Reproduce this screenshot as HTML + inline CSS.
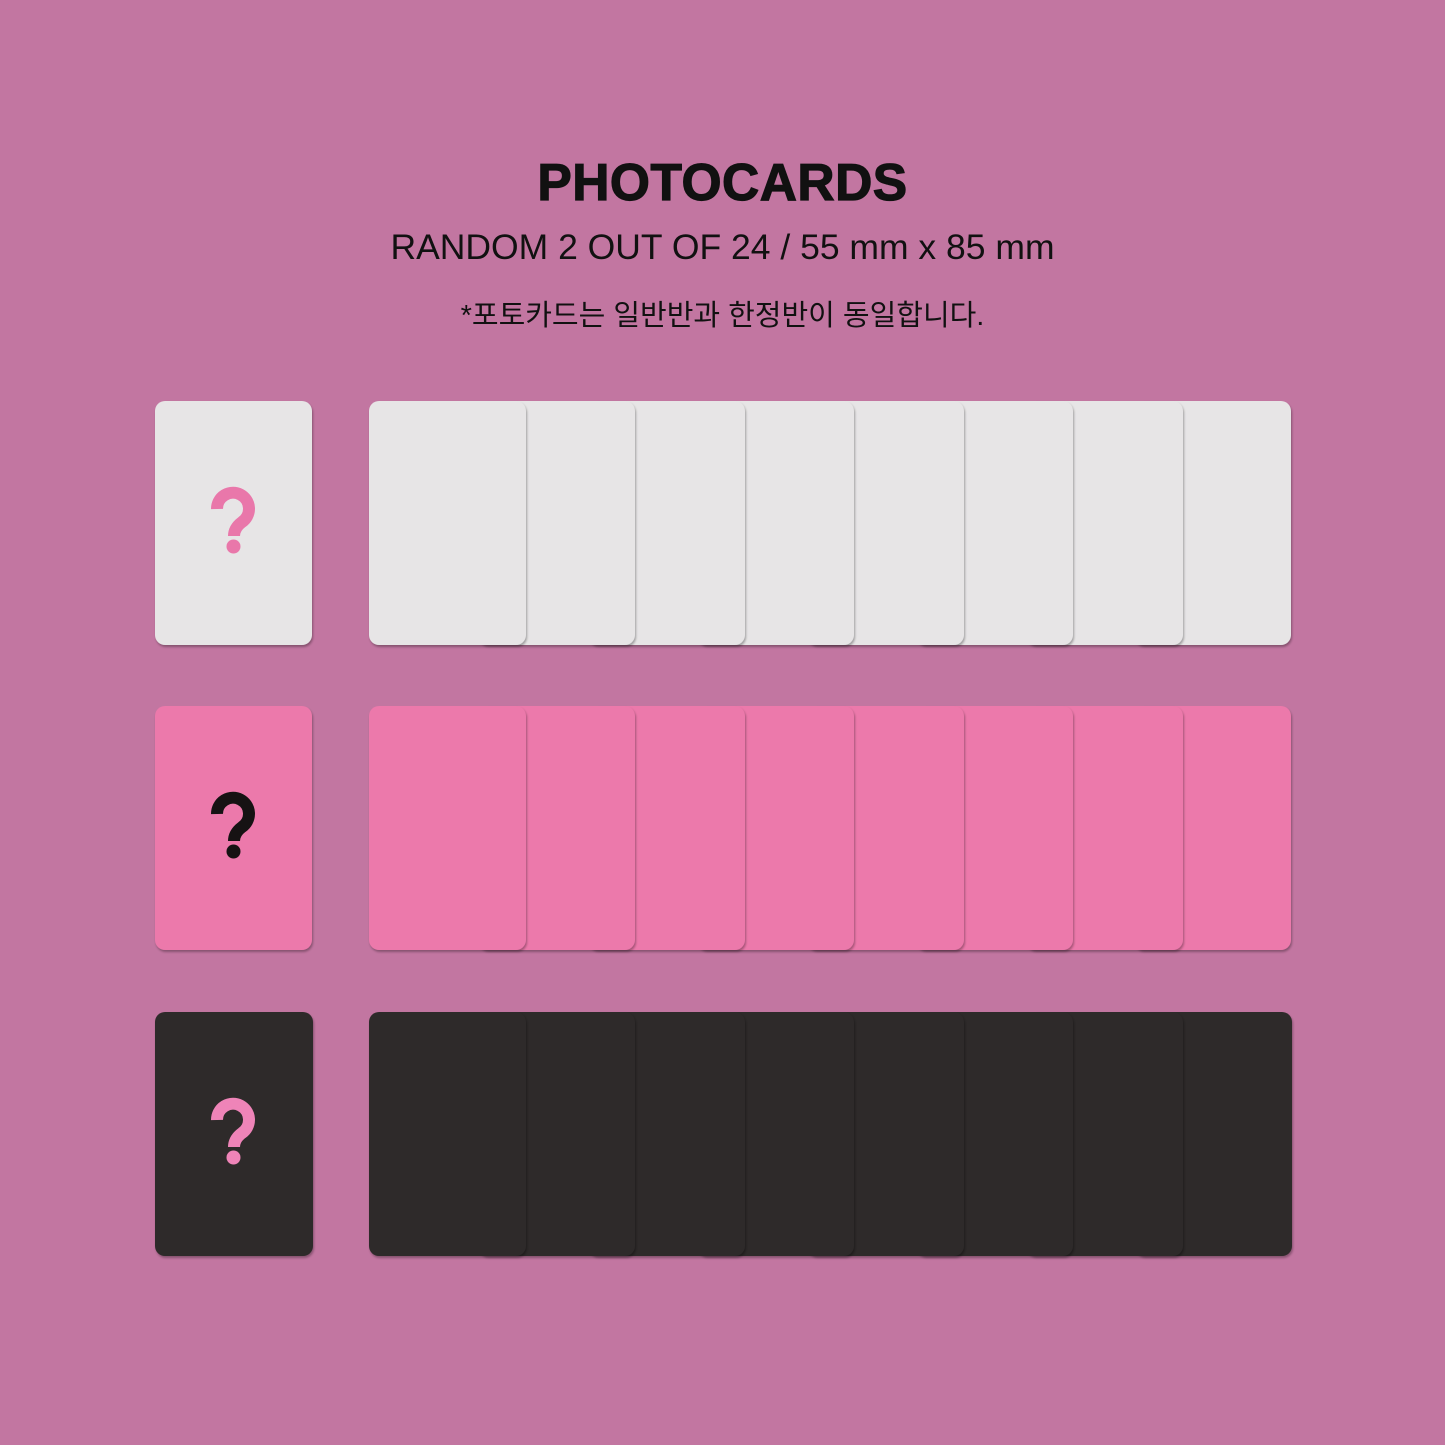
<!DOCTYPE html>
<html><head><meta charset="utf-8"><style>
html,body{margin:0;padding:0}
body{width:1445px;height:1445px;background:#c276a1;position:relative;overflow:hidden;font-family:"Liberation Sans","Noto Sans CJK KR",sans-serif}
.t{position:absolute;left:0;width:1445px;text-align:center;color:#111}
.c{position:absolute;width:157px;height:244px;border-radius:10px;box-shadow:1px 2px 2px rgba(0,0,0,.3)}
.w{background:#e7e5e6}.p{background:#ec79ab}.d{background:#2e2a2a}
.c svg{position:absolute;left:0;top:0}
</style></head><body>
<div class="t" style="top:152px;font-size:51.5px;font-weight:900;letter-spacing:0.5px;-webkit-text-stroke:1.2px #111">PHOTOCARDS</div>
<div class="t" style="top:227px;font-size:35.5px">RANDOM 2 OUT OF 24 / 55 mm x 85 mm</div>
<div class="t" style="top:292px;font-size:29px">*포토카드는 일반반과 한정반이 동일합니다.</div>

<div class="c w" style="left:155px;top:401px"><svg width="157" height="244"><path d="M62,108 A16,16 0 1 1 87,121 Q79,127 79,135" fill="none" stroke="#e977aa" stroke-width="12"/><circle cx="78.5" cy="145.5" r="7" fill="#e977aa"/></svg></div>
<div class="c w" style="left:369px;top:401px;z-index:8"></div>
<div class="c w" style="left:478px;top:401px;z-index:7"></div>
<div class="c w" style="left:588px;top:401px;z-index:6"></div>
<div class="c w" style="left:697px;top:401px;z-index:5"></div>
<div class="c w" style="left:807px;top:401px;z-index:4"></div>
<div class="c w" style="left:916px;top:401px;z-index:3"></div>
<div class="c w" style="left:1026px;top:401px;z-index:2"></div>
<div class="c w" style="left:1134px;top:401px;z-index:1"></div>

<div class="c p" style="left:155px;top:706px"><svg width="157" height="244"><path d="M62,108 A16,16 0 1 1 87,121 Q79,127 79,135" fill="none" stroke="#161213" stroke-width="12"/><circle cx="78.5" cy="145.5" r="7" fill="#161213"/></svg></div>
<div class="c p" style="left:369px;top:706px;z-index:8"></div>
<div class="c p" style="left:478px;top:706px;z-index:7"></div>
<div class="c p" style="left:588px;top:706px;z-index:6"></div>
<div class="c p" style="left:697px;top:706px;z-index:5"></div>
<div class="c p" style="left:807px;top:706px;z-index:4"></div>
<div class="c p" style="left:916px;top:706px;z-index:3"></div>
<div class="c p" style="left:1026px;top:706px;z-index:2"></div>
<div class="c p" style="left:1134px;top:706px;z-index:1"></div>

<div class="c d" style="left:155px;top:1012px;width:158px"><svg width="158" height="244"><path d="M62,108 A16,16 0 1 1 87,121 Q79,127 79,135" fill="none" stroke="#ef84b8" stroke-width="12"/><circle cx="78.5" cy="145.5" r="7" fill="#ef84b8"/></svg></div>
<div class="c d" style="left:369px;top:1012px;z-index:8"></div>
<div class="c d" style="left:478px;top:1012px;z-index:7"></div>
<div class="c d" style="left:588px;top:1012px;z-index:6"></div>
<div class="c d" style="left:697px;top:1012px;z-index:5"></div>
<div class="c d" style="left:807px;top:1012px;z-index:4"></div>
<div class="c d" style="left:916px;top:1012px;z-index:3"></div>
<div class="c d" style="left:1026px;top:1012px;z-index:2"></div>
<div class="c d" style="left:1135px;top:1012px;z-index:1"></div>
</body></html>
